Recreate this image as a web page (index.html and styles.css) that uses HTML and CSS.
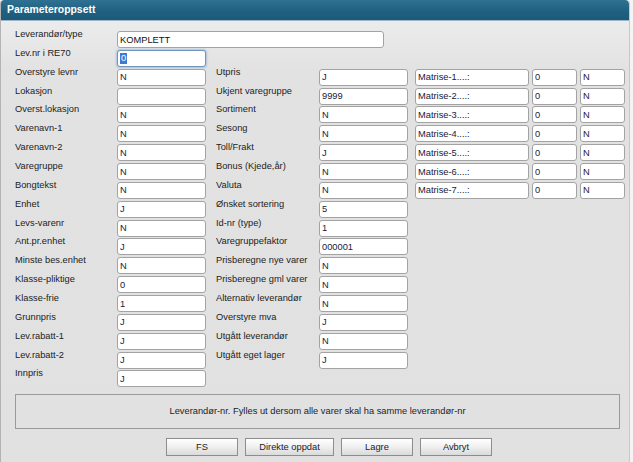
FILE: index.html
```html
<!DOCTYPE html>
<html lang="no">
<head>
<meta charset="utf-8">
<title>Parameteroppsett</title>
<link rel="stylesheet" href="styles.css">
</head>
<body>
<div class="window">
  <div class="titlebar">Parameteroppsett</div>
  <div class="content">
    <div class="form">
      <label class="lbl c1">Leverandør/type</label>
      <input class="fld wide" value="KOMPLETT" readonly>

      <label class="lbl c1">Lev.nr i RE70</label>
      <div class="fld c2 focus"><span class="sel">0</span></div>

      <label class="lbl c1">Overstyre levnr</label><input class="fld c2" value="N" readonly>
      <label class="lbl c4">Utpris</label><input class="fld c5" value="J" readonly>
      <input class="fld c7" value="Matrise-1....:" readonly><input class="fld c9" value="0" readonly><input class="fld c11" value="N" readonly>

      <label class="lbl c1">Lokasjon</label><input class="fld c2" value="" readonly>
      <label class="lbl c4">Ukjent varegruppe</label><input class="fld c5" value="9999" readonly>
      <input class="fld c7" value="Matrise-2....:" readonly><input class="fld c9" value="0" readonly><input class="fld c11" value="N" readonly>

      <label class="lbl c1">Overst.lokasjon</label><input class="fld c2" value="N" readonly>
      <label class="lbl c4">Sortiment</label><input class="fld c5" value="N" readonly>
      <input class="fld c7" value="Matrise-3....:" readonly><input class="fld c9" value="0" readonly><input class="fld c11" value="N" readonly>

      <label class="lbl c1">Varenavn-1</label><input class="fld c2" value="N" readonly>
      <label class="lbl c4">Sesong</label><input class="fld c5" value="N" readonly>
      <input class="fld c7" value="Matrise-4....:" readonly><input class="fld c9" value="0" readonly><input class="fld c11" value="N" readonly>

      <label class="lbl c1">Varenavn-2</label><input class="fld c2" value="N" readonly>
      <label class="lbl c4">Toll/Frakt</label><input class="fld c5" value="J" readonly>
      <input class="fld c7" value="Matrise-5....:" readonly><input class="fld c9" value="0" readonly><input class="fld c11" value="N" readonly>

      <label class="lbl c1">Varegruppe</label><input class="fld c2" value="N" readonly>
      <label class="lbl c4">Bonus (Kjede,år)</label><input class="fld c5" value="N" readonly>
      <input class="fld c7" value="Matrise-6....:" readonly><input class="fld c9" value="0" readonly><input class="fld c11" value="N" readonly>

      <label class="lbl c1">Bongtekst</label><input class="fld c2" value="N" readonly>
      <label class="lbl c4">Valuta</label><input class="fld c5" value="N" readonly>
      <input class="fld c7" value="Matrise-7....:" readonly><input class="fld c9" value="0" readonly><input class="fld c11" value="N" readonly>

      <label class="lbl c1">Enhet</label><input class="fld c2" value="J" readonly>
      <label class="lbl c4">Ønsket sortering</label><input class="fld c5" value="5" readonly>

      <label class="lbl c1">Levs-varenr</label><input class="fld c2" value="N" readonly>
      <label class="lbl c4">Id-nr (type)</label><input class="fld c5" value="1" readonly>

      <label class="lbl c1">Ant.pr.enhet</label><input class="fld c2" value="J" readonly>
      <label class="lbl c4">Varegruppefaktor</label><input class="fld c5" value="000001" readonly>

      <label class="lbl c1">Minste bes.enhet</label><input class="fld c2" value="N" readonly>
      <label class="lbl c4">Prisberegne nye varer</label><input class="fld c5" value="N" readonly>

      <label class="lbl c1">Klasse-pliktige</label><input class="fld c2" value="0" readonly>
      <label class="lbl c4">Prisberegne gml varer</label><input class="fld c5" value="N" readonly>

      <label class="lbl c1">Klasse-frie</label><input class="fld c2" value="1" readonly>
      <label class="lbl c4">Alternativ leverandør</label><input class="fld c5" value="N" readonly>

      <label class="lbl c1">Grunnpris</label><input class="fld c2" value="J" readonly>
      <label class="lbl c4">Overstyre mva</label><input class="fld c5" value="J" readonly>

      <label class="lbl c1">Lev.rabatt-1</label><input class="fld c2" value="J" readonly>
      <label class="lbl c4">Utgått leverandør</label><input class="fld c5" value="N" readonly>

      <label class="lbl c1">Lev.rabatt-2</label><input class="fld c2" value="J" readonly>
      <label class="lbl c4">Utgått eget lager</label><input class="fld c5" value="J" readonly>

      <label class="lbl c1">Innpris</label><input class="fld c2" value="J" readonly>
    </div>

    <div class="message">Leverandør-nr. Fylles ut dersom alle varer skal ha samme leverandør-nr</div>

    <div class="buttons">
      <button class="btn">FS</button>
      <button class="btn btn-wide">Direkte oppdat</button>
      <button class="btn">Lagre</button>
      <button class="btn">Avbryt</button>
    </div>
  </div>
</div>
</body>
</html>
```
FILE: styles.css
```css
* { box-sizing: border-box; }

html, body {
  margin: 0;
  padding: 0;
  height: 100%;
}

body {
  background: #f4f4f4;
  font-family: "Liberation Sans", Arial, sans-serif;
  font-size: 9.3px;
  color: #1e1e1e;
  overflow: hidden;
}

.window {
  width: 630px;
  height: 462px;
  border-left: 1px solid #b4b4b4;
  border-right: 1px solid #c8c8c8;
  background: linear-gradient(#f0f0f0 0, #e2e2e2 70px, #e1e1e1 100%);
  border-radius: 4px 4px 0 0;
  overflow: hidden;
}

.titlebar {
  height: 21px;
  background: linear-gradient(#2f7192 0, #1f5f80 60%, #1c5a7a 100%);
  border-bottom: 1px solid #9bb5c4;
  color: #ffffff;
  font-weight: bold;
  font-size: 10.4px;
  line-height: 20px;
  padding-left: 7px;
  margin-left: -1px;
  border-radius: 4px 4px 0 0;
}

.content {
  padding: 10px 0 0 14px;
}

.form {
  display: grid;
  grid-template-columns: 102px 89px 10px 103px 89px 7px 114px 3px 45px 3px 45px;
  grid-auto-rows: 18.86px;
  align-items: start;
}

.lbl {
  grid-column: 1;
  line-height: 13px;
  margin-top: -3px;
  white-space: nowrap;
  color: #222;
}

.c1 { grid-column: 1; }
.c2 { grid-column: 2; }
.c4 { grid-column: 4; }
.c5 { grid-column: 5; }
.c7 { grid-column: 7; }
.c9 { grid-column: 9; }
.c11 { grid-column: 11; }

.fld {
  display: block;
  width: 100%;
  height: 17px;
  margin: 0;
  padding: 0 0 0 2px;
  border: 1px solid #a3a3a3;
  border-radius: 3px;
  background: #ffffff;
  font-family: "Liberation Sans", Arial, sans-serif;
  font-size: 9.3px;
  line-height: 15px;
  color: #20203a;
  outline: none;
}

.fld.wide {
  grid-column: 2 / 6;
  width: 267px;
  color: #111;
}

.fld.focus {
  border: 1px solid #6f96bb;
  box-shadow: 0 0 2px 1px #a9c3dc;
}

.sel {
  display: inline-block;
  background: #3a7bd5;
  color: #ffffff;
  line-height: 11px;
  padding: 0 1px;
  margin-top: 2px;
  vertical-align: top;
}

.message {
  margin-top: 5px;
  width: 605px;
  height: 35px;
  border: 1px solid #9a9a9a;
  display: flex;
  align-items: center;
  justify-content: center;
  color: #222;
  padding-bottom: 1px;
}

.buttons {
  display: flex;
  gap: 7px;
  margin-top: 9px;
  padding-left: 151px;
}

.btn {
  width: 72px;
  height: 18px;
  padding: 0;
  border: 1px solid #8d8d8d;
  border-radius: 0;
  background: linear-gradient(#ffffff 0, #f1f1f1 45%, #dadada 100%);
  font-family: "Liberation Sans", Arial, sans-serif;
  font-size: 9.3px;
  color: #222;
}

.btn-wide {
  width: 89px;
}
```
